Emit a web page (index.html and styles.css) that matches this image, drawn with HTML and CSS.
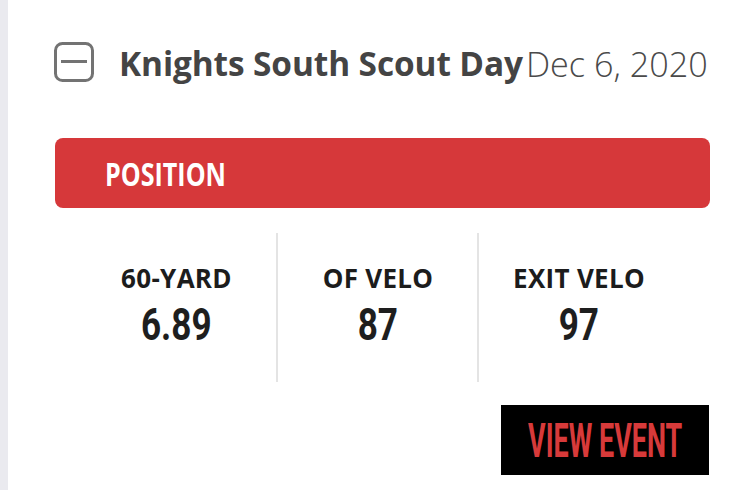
FILE: index.html
```html
<!DOCTYPE html>
<html lang="en">
<head>
<meta charset="utf-8">
<title>Event</title>
<link rel="stylesheet" href="styles.css">
</head>
<body>
<div class="page">
  <div class="rail"></div>
  <main class="content">
    <header class="event-head">
      <svg class="toggle" width="40" height="40" viewBox="0 0 40 40" aria-hidden="true">
        <rect x="1.5" y="1.5" width="37" height="37" rx="7" ry="7" fill="none" stroke="#737373" stroke-width="3"/>
        <line x1="7" y1="19.5" x2="33" y2="19.5" stroke="#737373" stroke-width="3"/>
      </svg>
      <h1 class="title">Knights South Scout Day</h1>
      <span class="date">Dec 6, 2020</span>
    </header>
    <div class="bar"><span class="bar-label">POSITION</span></div>
    <section class="stats">
      <div class="stat">
        <div class="stat-label">60-YARD</div>
        <div class="stat-value"><span>6.89</span></div>
      </div>
      <div class="stat">
        <div class="stat-label">OF VELO</div>
        <div class="stat-value"><span>87</span></div>
      </div>
      <div class="stat">
        <div class="stat-label">EXIT VELO</div>
        <div class="stat-value"><span>97</span></div>
      </div>
    </section>
    <div class="actions">
      <a class="view-btn" href="#"><span>VIEW EVENT</span></a>
    </div>
  </main>
</div>
</body>
</html>
```
FILE: styles.css
```css
html, body {
  margin: 0;
  padding: 0;
  background: #ffffff;
}
.page {
  display: flex;
  width: 750px;
  height: 490px;
  overflow: hidden;
}
.rail {
  width: 8px;
  flex: none;
  background: #eaeaef;
}
.content {
  flex: 1;
  min-width: 0;
  padding-left: 47px;
  padding-right: 40px;
}
.event-head {
  display: flex;
  align-items: flex-start;
  padding-top: 41px;
  height: 138px;
  box-sizing: border-box;
}
.toggle {
  flex: none;
  margin-top: 1px;
  margin-left: -1px;
}
.title {
  flex: none;
  margin: 0 0 0 25px;
  font-family: "Open Sans", sans-serif;
  font-weight: 700;
  font-size: 33.4px;
  line-height: 45px;
  color: #444444;
  letter-spacing: -0.1px;
  white-space: nowrap;
}
.date {
  flex: none;
  margin-left: 3px;
  font-family: "Open Sans", sans-serif;
  font-weight: 300;
  font-size: 34.2px;
  line-height: 45px;
  color: #4a4a4a;
  white-space: nowrap;
}
.bar {
  height: 70px;
  background: #d6383a;
  border-radius: 8px;
  display: flex;
  align-items: center;
  padding-left: 50px;
}
.bar-label {
  display: inline-block;
  font-family: "Open Sans", sans-serif;
  font-weight: 700;
  font-size: 33px;
  line-height: 45px;
  color: #ffffff;
  transform: scaleX(0.76);
  transform-origin: left center;
}
.stats {
  display: grid;
  grid-template-columns: 201px 201px 201px;
  margin: 25px 0 0 21px;
  height: 149px;
}
.stat {
  padding-top: 30px;
  text-align: center;
  box-sizing: border-box;
}
.stat + .stat {
  border-left: 2px solid #e4e4e4;
}
.stat:nth-child(2) { margin-left: -1px; }
.stat:nth-child(3) { margin-left: -1px; }
.stat-label {
  font-family: "Open Sans", sans-serif;
  font-weight: 700;
  font-size: 26px;
  line-height: 30px;
  color: #1c1c1c;
  letter-spacing: 0.3px;
}
.stat-value {
  margin-top: 9px;
  font-family: Roboto, sans-serif;
  font-weight: 700;
  font-size: 45px;
  line-height: 45px;
  color: #1e1e1e;
}
.stat-value span {
  display: inline-block;
  transform: scaleX(0.78);
}
.actions {
  display: flex;
  justify-content: flex-end;
  margin-top: 23px;
  padding-right: 1px;
}
.view-btn {
  width: 208px;
  height: 70px;
  background: #000000;
  display: flex;
  align-items: center;
  justify-content: center;
  text-decoration: none;
  overflow: visible;
}
.view-btn span {
  display: inline-block;
  flex: none;
  font-family: Roboto, sans-serif;
  font-weight: 700;
  font-size: 49px;
  line-height: 49px;
  color: #d73a3a;
  transform: scaleX(0.55);
  white-space: nowrap;
}
```
